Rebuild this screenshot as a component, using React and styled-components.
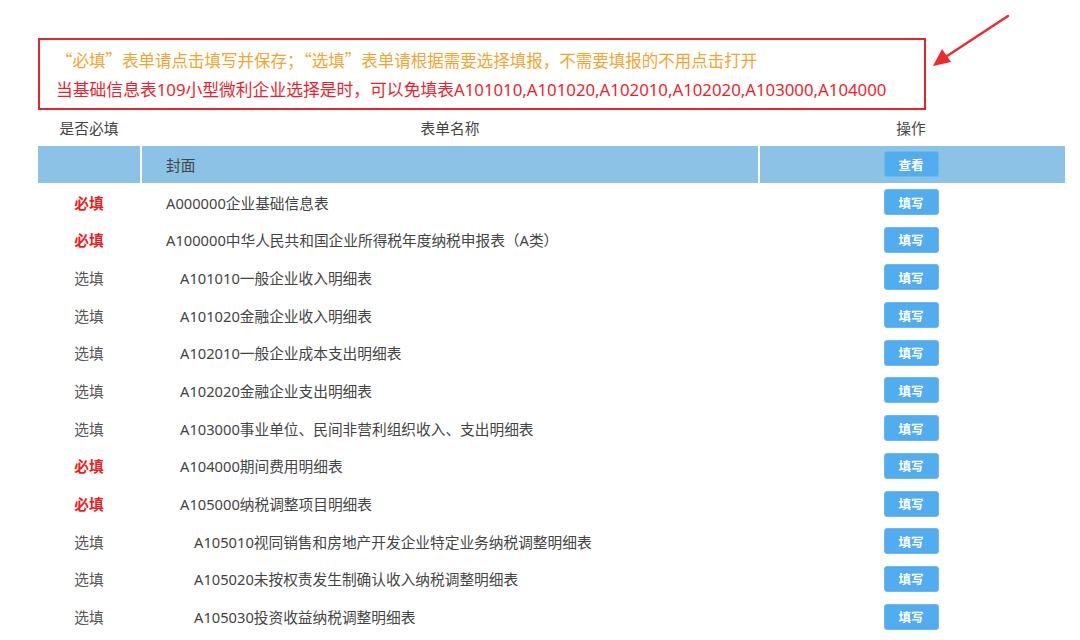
import React from "react";
import styled, { createGlobalStyle } from "styled-components";

const GlobalStyle = createGlobalStyle`
  html, body {
    margin: 0;
    padding: 0;
    background: #fff;
  }
  body {
    font-family: "Noto Sans", "Noto Sans CJK SC", sans-serif;
    color: #333;
  }
`;

const rows = [
  { must: true, name: "A000000企业基础信息表", level: 0 },
  { must: true, name: "A100000中华人民共和国企业所得税年度纳税申报表（A类）", level: 0 },
  { must: false, name: "A101010一般企业收入明细表", level: 1 },
  { must: false, name: "A101020金融企业收入明细表", level: 1 },
  { must: false, name: "A102010一般企业成本支出明细表", level: 1 },
  { must: false, name: "A102020金融企业支出明细表", level: 1 },
  { must: false, name: "A103000事业单位、民间非营利组织收入、支出明细表", level: 1 },
  { must: true, name: "A104000期间费用明细表", level: 1 },
  { must: true, name: "A105000纳税调整项目明细表", level: 1 },
  { must: false, name: "A105010视同销售和房地产开发企业特定业务纳税调整明细表", level: 2 },
  { must: false, name: "A105020未按权责发生制确认收入纳税调整明细表", level: 2 },
  { must: false, name: "A105030投资收益纳税调整明细表", level: 2 },
];

const Page = styled.div`
  position: relative;
  padding: 38px 0 0 38px;
  width: 1080px;
  height: 640px;
  box-sizing: border-box;
  overflow: hidden;
`;

const Notice = styled.div`
  width: 888px;
  height: 72px;
  box-sizing: border-box;
  border: 2px solid #e8232c;
  padding: 6px 16px 0 16px;
`;

const NoticeLine = styled.div`
  line-height: 29px;
  white-space: nowrap;
  font-family: ${(p) =>
    p.$strong ? `"Noto Sans", "Noto Sans CJK SC", sans-serif` : `"Noto Sans CJK SC", sans-serif`};
  font-size: ${(p) => (p.$strong ? "16.8px" : "16.5px")};
  color: ${(p) => (p.$strong ? "#f01e2c" : "#f5a430")};
`;

const Arrow = styled.svg`
  position: absolute;
  left: 920px;
  top: 8px;
`;

const Table = styled.table`
  width: 1027px;
  border-collapse: collapse;
  table-layout: fixed;
  font-size: 14.7px;
`;

const Row = styled.tr`
  height: ${(p) => (p.$head ? "35.5px" : "37.7px")};
  background: ${(p) => (p.$cover ? "#8bc2e6" : "transparent")};
`;

const HeadCell = styled.th`
  font-weight: normal;
  color: #444;
  text-align: center;
  padding: 0;
  border-right: 2px solid #fff;
  &:last-child {
    border-right: none;
    padding-right: 3px;
  }
`;

const Cell = styled.td`
  padding: 0;
  text-align: center;
  border-right: 2px solid #fff;
  &:last-child {
    border-right: none;
    padding-right: 3px;
  }
`;

const MustCell = styled(Cell)`
  color: ${(p) => (p.$must ? "#f21c1c" : "#555")};
  font-weight: ${(p) => (p.$must ? "bold" : "normal")};
`;

const NameCell = styled(Cell)`
  text-align: left;
  color: #444;
  white-space: nowrap;
  padding-left: ${(p) => 24 + p.$level * 14}px;
`;

const ActionButton = styled.button`
  width: 55px;
  height: 26px;
  border: 1px solid #6db8f0;
  border-radius: 3px;
  background: #52acf0;
  color: #fff;
  font-family: "Noto Sans CJK SC", sans-serif;
  font-size: 12.5px;
  font-weight: bold;
  padding: 0;
  vertical-align: middle;
  cursor: pointer;
`;

export default function App() {
  return (
    <>
      <GlobalStyle />
      <Page>
        <Notice>
          <NoticeLine>“必填”表单请点击填写并保存；“选填”表单请根据需要选择填报，不需要填报的不用点击打开</NoticeLine>
          <NoticeLine $strong>
            当基础信息表109小型微利企业选择是时，可以免填表A101010,A101020,A102010,A102020,A103000,A104000
          </NoticeLine>
        </Notice>
        <Arrow width="100" height="70" viewBox="0 0 100 70">
          <line x1="88" y1="8" x2="24" y2="50" stroke="#ec2a2f" strokeWidth="2.5" strokeLinecap="round" />
          <polygon points="13,58 22,41 31,54" fill="#ec2a2f" />
        </Arrow>
        <Table>
          <colgroup>
            <col style={{ width: 103 }} />
            <col style={{ width: 618 }} />
            <col style={{ width: 306 }} />
          </colgroup>
          <thead>
            <Row $head>
              <HeadCell>是否必填</HeadCell>
              <HeadCell>表单名称</HeadCell>
              <HeadCell>操作</HeadCell>
            </Row>
          </thead>
          <tbody>
            <Row $cover>
              <Cell />
              <NameCell $level={0}>封面</NameCell>
              <Cell>
                <ActionButton>查看</ActionButton>
              </Cell>
            </Row>
            {rows.map((r) => (
              <Row key={r.name}>
                <MustCell $must={r.must}>{r.must ? "必填" : "选填"}</MustCell>
                <NameCell $level={r.level}>{r.name}</NameCell>
                <Cell>
                  <ActionButton>填写</ActionButton>
                </Cell>
              </Row>
            ))}
          </tbody>
        </Table>
      </Page>
    </>
  );
}
